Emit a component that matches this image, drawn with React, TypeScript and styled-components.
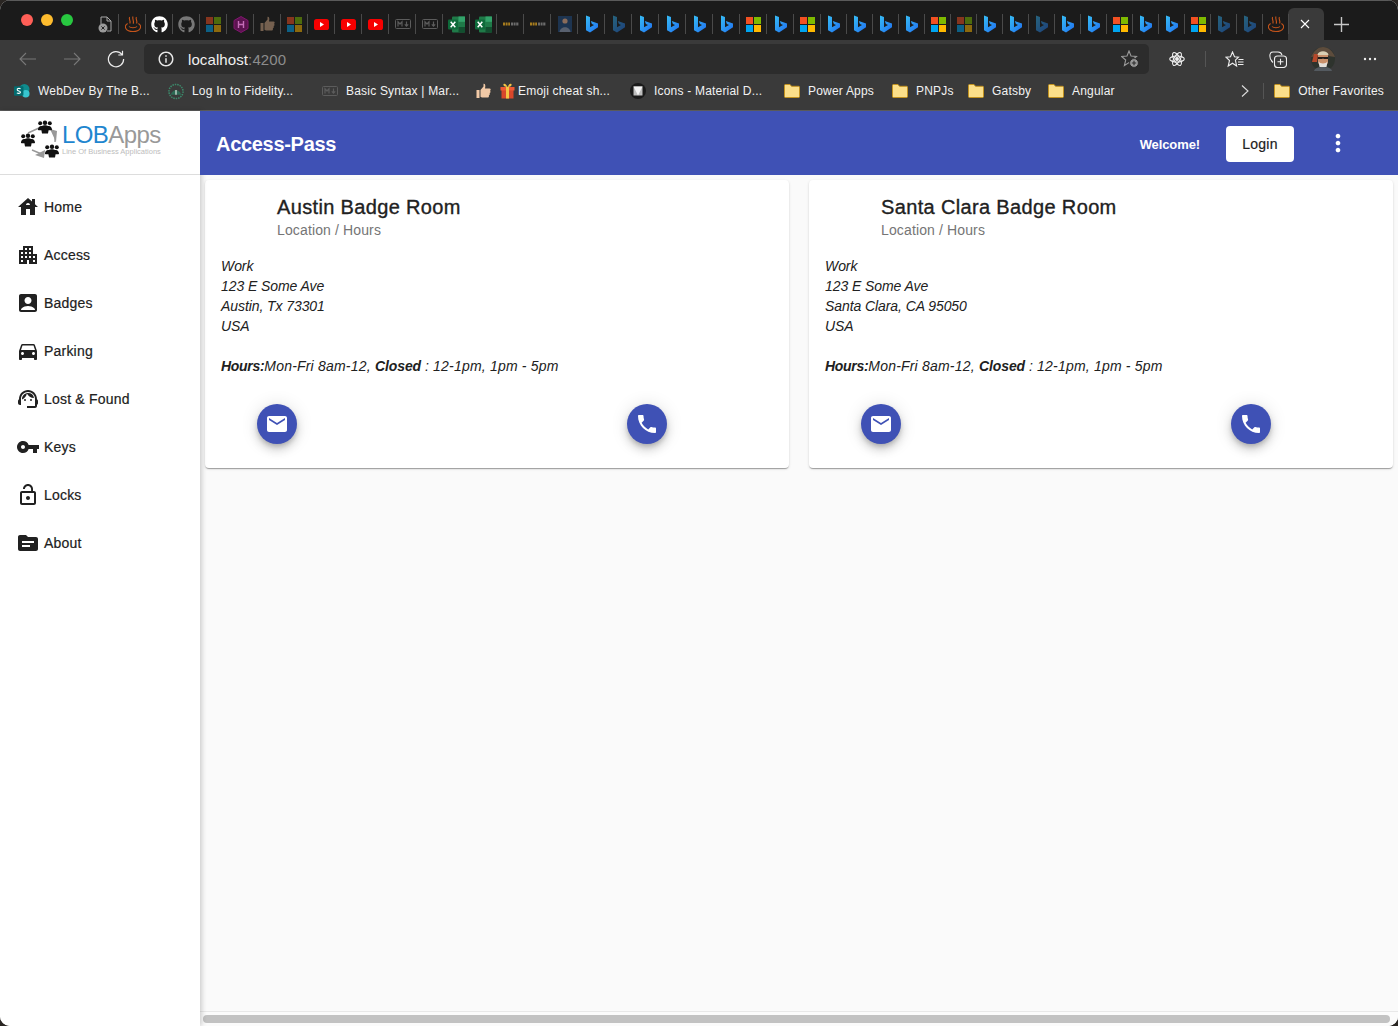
import React from "react";
import styled, { createGlobalStyle } from "styled-components";
import { FaGithub } from "react-icons/fa";
import {
  MdAccountBox,
  MdApartment,
  MdDirectionsCar,
  MdEmail,
  MdHouse,
  MdInfoOutline,
  MdLockOpen,
  MdMoreVert,
  MdOutlineSupportAgent,
  MdPhone,
  MdTopic,
  MdVpnKey,
} from "react-icons/md";

const GlobalStyle = createGlobalStyle`
  html, body {
    margin: 0;
    height: 100%;
    background: #2a2623;
    overflow: hidden;
  }
  * {
    box-sizing: border-box;
  }
`;

// favicons
const Bing = ({ dim }: { dim?: boolean }) => (
  <svg width="14" height="18" viewBox="0 0 14 18" opacity={dim ? 0.45 : 1}>
    <defs>
      <linearGradient id="bingFill" x1="0" y1="0" x2="1" y2="1">
        <stop offset="0" stopColor="#37bdf5" />
        <stop offset="1" stopColor="#1f6ff0" />
      </linearGradient>
    </defs>
    <path
      d="M1 0.5 L5 2 V12.2 L9 9.9 L6.9 8.9 L5.8 6 L13 8.6 V12.2 L5 17.5 L1 15.2 Z"
      fill="url(#bingFill)"
    />
  </svg>
);

const Microsoft = styled.span<{ $dim?: boolean }>`
  display: grid;
  grid-template-columns: 7px 7px;
  grid-template-rows: 7px 7px;
  gap: 1px;
  opacity: ${(p) => (p.$dim ? 0.5 : 1)};

  i:nth-child(1) { background: #f25022; }
  i:nth-child(2) { background: #7fba00; }
  i:nth-child(3) { background: #00a4ef; }
  i:nth-child(4) { background: #ffb900; }
`;

const Windows = ({ dim }: { dim?: boolean }) => (
  <Microsoft $dim={dim}>
    <i />
    <i />
    <i />
    <i />
  </Microsoft>
);

const Steam = () => (
  <svg width="16" height="17" viewBox="0 0 16 17" fill="none" stroke="#c4541b" strokeWidth="1.1">
    <path d="M4.6 1 C3.4 3 6 4.5 4.8 7.5 M8 0.6 C6.8 3 9.4 4.5 8.2 7.8 M11.4 1 C10.2 3 12.8 4.5 11.6 7.5" />
    <path d="M2.6 7.5 C-1.6 10 0.4 15.5 8 15.5 C15.6 15.5 17.6 10 13.4 7.5" />
    <path d="M4 10.5 C5.5 12.2 10.5 12.2 12 10.5" />
  </svg>
);

const YouTube = () => (
  <svg width="15" height="11" viewBox="0 0 15 11">
    <rect width="15" height="11" rx="2.6" fill="#f70000" />
    <path d="M6 3 L10 5.5 L6 8 Z" fill="#fff" />
  </svg>
);

const Markdown = () => (
  <svg width="16" height="10" viewBox="0 0 16 10" fill="none" stroke="#5c5c5c">
    <rect x="0.5" y="0.5" width="15" height="9" rx="1" />
    <path d="M3 7.5 V2.8 L5 5 L7 2.8 V7.5 M11.5 2.5 V7 M9.8 5.4 L11.5 7.2 L13.2 5.4" strokeWidth="1.2" />
  </svg>
);

const Excel = () => (
  <svg width="17" height="17" viewBox="0 0 17 17">
    <rect x="4" y="0.5" width="13" height="16" rx="1" fill="#1f7a48" />
    <rect x="10.5" y="0.5" width="6.5" height="5.3" fill="#33a36a" />
    <rect x="10.5" y="11" width="6.5" height="5.5" fill="#124f2f" />
    <rect x="0" y="3.5" width="10" height="10" rx="1" fill="#0e6b3a" />
    <path d="M2.7 5.8 L7.3 11.2 M7.3 5.8 L2.7 11.2" stroke="#fff" strokeWidth="1.5" />
  </svg>
);

const Hex = () => (
  <svg width="16" height="17" viewBox="0 0 16 17">
    <path d="M8 0.5 L15 4.5 V12.5 L8 16.5 L1 12.5 V4.5 Z" fill="#5c1350" stroke="#82166f" />
    <path d="M5.5 5 V12 M10.5 5 V12 M5.5 8.5 H10.5" stroke="#c56db8" strokeWidth="1.4" fill="none" />
  </svg>
);

const Thumb = ({ light }: { light?: boolean }) => (
  <svg width="15" height="16" viewBox="0 0 15 16">
    <path
      d="M0.5 7 H3.5 V15 H0.5 Z M4.5 7 L7.5 3.5 V0.8 C9.2 0.6 9.8 2.2 9 5.5 H13.5 C15 5.5 15 7.4 14 7.7 C15 8.6 14.5 9.8 13.6 10 C14.2 11 13.6 12 12.9 12.2 C13.2 13.4 12.6 14.6 11.5 14.6 H6 L4.5 13.8 Z"
      fill={light ? "#f1c9a6" : "#75604f"}
    />
  </svg>
);

const Gift = () => (
  <svg width="15" height="16" viewBox="0 0 15 16">
    <rect x="1.5" y="7" width="12" height="8.5" fill="#d9472b" />
    <rect x="0.5" y="4" width="14" height="3.5" fill="#ee5a35" />
    <rect x="6" y="4" width="3" height="11.5" fill="#f6c544" />
    <path d="M7.5 4 C3 4 2.5 0.8 4.5 0.8 C6 0.8 7.5 4 7.5 4 C7.5 4 9 0.8 10.5 0.8 C12.5 0.8 12 4 7.5 4 Z" fill="#f6c544" />
  </svg>
);

const Folder = () => (
  <svg width="16" height="14" viewBox="0 0 16 14">
    <path
      d="M0.5 1.5 C0.5 0.9 0.9 0.5 1.5 0.5 H6 L7.5 2.3 H14.5 C15.1 2.3 15.5 2.7 15.5 3.3 V12.5 C15.5 13.1 15.1 13.5 14.5 13.5 H1.5 C0.9 13.5 0.5 13.1 0.5 12.5 Z"
      fill="#fbdf8a"
      stroke="#c2921f"
    />
  </svg>
);

const SharePoint = () => (
  <svg width="17" height="16" viewBox="0 0 17 16">
    <circle cx="11" cy="6" r="5.5" fill="#0f8b8d" />
    <circle cx="12.5" cy="11" r="4" fill="#37c6d0" />
    <rect x="0" y="3" width="10" height="10" rx="1" fill="#036c70" />
    <path d="M7 5.6 C5 4.8 3 5.5 3.5 7 C4 8.2 7 7.8 6.8 9.4 C6.5 11 4 10.6 3 10" stroke="#fff" strokeWidth="1.2" fill="none" />
  </svg>
);

const Fidelity = () => (
  <svg width="17" height="17" viewBox="0 0 17 17" fill="none">
    <circle cx="8.5" cy="8.5" r="7.5" stroke="#3c8a6b" strokeWidth="1.6" strokeDasharray="1.6 1" />
    <path d="M3 12 C4.5 5.5 12.5 5.5 14 12 Z" fill="#2c6a54" />
    <path d="M8.5 12 V7" stroke="#e8f0ea" strokeWidth="1.2" />
  </svg>
);

const MaterialMark = () => (
  <svg width="16" height="16" viewBox="0 0 16 16">
    <circle cx="8" cy="8" r="8" fill="#1a1a1a" />
    <path d="M3.5 3.5 H12.5 V12.5 H3.5 Z" fill="#bdbdbd" />
    <path d="M3.5 3.5 H12.5 L8 12.5 Z" fill="#f2f2f2" />
  </svg>
);

const PageX = () => (
  <svg width="15" height="17" viewBox="0 0 15 17" fill="none" stroke="#a8a8a8">
    <path d="M3 8 V1 H9 L13 5 V15 H9" />
    <path d="M9 1 V5 H13" />
    <circle cx="5" cy="12" r="4.5" fill="#9a9a9a" stroke="none" />
    <path d="M3.4 10.4 L6.6 13.6 M6.6 10.4 L3.4 13.6" stroke="#222" />
  </svg>
);

const Ineuron = () => (
  <svg width="16" height="4" viewBox="0 0 16 4" fill="none" strokeWidth="3">
    <path d="M0 2 H7" stroke="#a67c1e" strokeDasharray="2 0.6" />
    <path d="M8 2 H16" stroke="#6b6b6b" strokeDasharray="2 0.6" />
  </svg>
);

const Portrait = () => (
  <svg width="14" height="16" viewBox="0 0 14 16">
    <rect width="14" height="16" fill="#1d3450" />
    <circle cx="7" cy="5" r="2.6" fill="#8a6c5a" />
    <path d="M1.5 16 C2 9.5 12 9.5 12.5 16 Z" fill="#58606e" />
  </svg>
);

const tabIcons: React.ReactNode[] = [
  <PageX />,
  <Steam />,
  <FaGithub size={17} color="#fff" />,
  <FaGithub size={17} color="#777" />,
  <Windows dim />,
  <Hex />,
  <Thumb />,
  <Windows dim />,
  <YouTube />,
  <YouTube />,
  <YouTube />,
  <Markdown />,
  <Markdown />,
  <Excel />,
  <Excel />,
  <Ineuron />,
  <Ineuron />,
  <Portrait />,
  <Bing />,
  <Bing dim />,
  <Bing />,
  <Bing />,
  <Bing />,
  <Bing />,
  <Windows />,
  <Bing />,
  <Windows />,
  <Bing />,
  <Bing />,
  <Bing />,
  <Bing />,
  <Windows />,
  <Windows dim />,
  <Bing />,
  <Bing />,
  <Bing dim />,
  <Bing />,
  <Bing />,
  <Windows />,
  <Bing />,
  <Bing />,
  <Windows />,
  <Bing dim />,
  <Bing dim />,
  <Steam />,
];

const bookmarks: { icon: React.ReactNode[]; label: string; width: number }[] = [
  { icon: [<SharePoint />], label: "WebDev By The B...", width: 154 },
  { icon: [<Fidelity />], label: "Log In to Fidelity...", width: 154 },
  { icon: [<Markdown />], label: "Basic Syntax | Mar...", width: 154 },
  { icon: [<Thumb light />, <Gift />], label: "Emoji cheat sh...", width: 154 },
  { icon: [<MaterialMark />], label: "Icons - Material D...", width: 154 },
  { icon: [<Folder />], label: "Power Apps", width: 108 },
  { icon: [<Folder />], label: "PNPJs", width: 76 },
  { icon: [<Folder />], label: "Gatsby", width: 80 },
  { icon: [<Folder />], label: "Angular", width: 80 },
];

const navItems = [
  { icon: <MdHouse />, label: "Home" },
  { icon: <MdApartment />, label: "Access" },
  { icon: <MdAccountBox />, label: "Badges" },
  { icon: <MdDirectionsCar />, label: "Parking" },
  { icon: <MdOutlineSupportAgent />, label: "Lost & Found" },
  { icon: <MdVpnKey />, label: "Keys" },
  { icon: <MdLockOpen />, label: "Locks" },
  { icon: <MdTopic />, label: "About" },
];

const rooms = [
  { name: "Austin Badge Room", city: "Austin, Tx 73301" },
  { name: "Santa Clara Badge Room", city: "Santa Clara, CA 95050" },
];

const People = ({ x, y }: { x: number; y: number }) => (
  <g transform={`translate(${x} ${y})`} fill="#111">
    <circle cx="2.2" cy="2.2" r="2" />
    <circle cx="7" cy="1.8" r="2.2" />
    <circle cx="11.8" cy="2.2" r="2" />
    <path d="M0 9 C0 5 3 4.6 4 5 C5 4 9 4 10 5 C11 4.6 14 5 14 9 C13 9.4 12 9.2 10.6 9.2 L10 12.5 H4 L3.4 9.2 C2 9.2 1 9.4 0 9 Z" />
  </g>
);

const Logo = () => (
  <LogoWrap>
    <LogoMark width="40" height="40" viewBox="0 0 40 40">
      <path d="M8 13 L19 8 M35 12 V22 M24 35 L12 30" stroke="#999" strokeWidth="1.4" fill="none" />
      <path d="M30 9 L37 11 L36 22 Z M15 35 L25 30 L24 38 Z" fill="#999" />
      <People x={18} y={1} />
      <People x={1} y={14} />
      <People x={25} y={25} />
    </LogoMark>
    <LogoText>
      <LogoName>
        <b>LOB</b>Apps
      </LogoName>
      <LogoTagline>Line Of Business Applications</LogoTagline>
    </LogoText>
  </LogoWrap>
);

export default function App() {
  return (
    <Window>
      <GlobalStyle />
      <TabStrip>
        <TrafficLights>
          <Light $color="#ff5f57" />
          <Light $color="#febc2e" />
          <Light $color="#28c840" />
        </TrafficLights>
        {tabIcons.map((icon, i) => (
          <TabIcon key={i} $wide={i < 27}>
            {icon}
          </TabIcon>
        ))}
        <ActiveTab>
          <svg width="10" height="10" viewBox="0 0 10 10" stroke="#fff" strokeWidth="1.1">
            <path d="M1 1 L9 9 M9 1 L1 9" />
          </svg>
        </ActiveTab>
        <NewTab>
          <svg width="15" height="15" viewBox="0 0 15 15" stroke="#c8c8c8" strokeWidth="1.4">
            <path d="M7.5 0 V15 M0 7.5 H15" />
          </svg>
        </NewTab>
      </TabStrip>

      <Toolbar>
        <ToolButton $width={44} $color="#777">
          <svg width="18" height="14" viewBox="0 0 18 14" fill="none" stroke="currentColor" strokeWidth="1.1">
            <path d="M17 7 H1 M7 1 L1 7 L7 13" />
          </svg>
        </ToolButton>
        <ToolButton $width={44} $color="#777">
          <svg width="18" height="14" viewBox="0 0 18 14" fill="none" stroke="currentColor" strokeWidth="1.1">
            <path d="M1 7 H17 M11 1 L17 7 L11 13" />
          </svg>
        </ToolButton>
        <ToolButton $width={44} $color="#ececec">
          <svg width="18" height="18" viewBox="0 0 18 18" fill="none" stroke="currentColor" strokeWidth="1.2">
            <path d="M15 4.5 A7.6 7.6 0 1 0 16.6 9 M15.5 0.8 V5 H11.3" />
          </svg>
        </ToolButton>
        <AddressBar>
          <MdInfoOutline size={18} color="#e6e6e6" />
          <Url>
            localhost<span>:4200</span>
          </Url>
          <FavAdd>
            <svg width="18" height="18" viewBox="0 0 18 18" fill="none" stroke="#9a9a9a" strokeWidth="1.1">
              <path d="M8 1 L10 6 L15.5 6.4 L11.3 10 L12.6 15.5 L8 12.6 L3.4 15.5 L4.7 10 L0.5 6.4 L6 6 Z" />
              <circle cx="13" cy="13" r="4.4" fill="#9a9a9a" stroke="#2c2c2c" strokeWidth="1" />
              <path d="M13 10.8 V15.2 M10.8 13 H15.2" stroke="#2c2c2c" />
            </svg>
          </FavAdd>
        </AddressBar>
        <ToolRight>
          <ToolButton $width={28} $color="#eee">
            <svg width="16" height="16" viewBox="-8 -8 16 16" fill="none" stroke="currentColor" strokeWidth="1.1">
              <ellipse rx="7.3" ry="3" />
              <ellipse rx="7.3" ry="3" transform="rotate(60)" />
              <ellipse rx="7.3" ry="3" transform="rotate(120)" />
              <circle r="1.4" fill="currentColor" />
            </svg>
          </ToolButton>
          <ToolDivider />
          <ToolButton $width={28} $color="#eee">
            <svg width="19" height="17" viewBox="0 0 19 17" fill="none" stroke="currentColor" strokeWidth="1.1">
              <path d="M7.5 1 L9.5 5.8 L13.5 6.2 L10.4 9.2 L11.6 15 L7.5 12.2 L3.2 15 L4.5 9.5 L1 6.2 L5.5 5.8 Z" />
              <path d="M13.5 8.5 H18.5 M13 11 H18.5 M13 13.5 H18.5" />
            </svg>
          </ToolButton>
          <ToolButton $width={28} $margin={16} $color="#eee">
            <svg width="18" height="17" viewBox="0 0 18 17" fill="none" stroke="currentColor" strokeWidth="1.1">
              <path d="M4 11.5 C1.5 9.5 0.5 7 1 3.5 C1.2 2 2.3 1 4 1 H9 C11 1 12.5 2 13 4" />
              <rect x="5.5" y="5" width="12" height="11.5" rx="3" />
              <path d="M11.5 7.8 V13.7 M8.5 10.7 H14.5" />
            </svg>
          </ToolButton>
          <Avatar $margin={19}>
            <svg width="24" height="24" viewBox="0 0 24 24">
              <circle cx="12" cy="12" r="12" fill="#2e332d" />
              <path d="M0 10 C3 3 8 0 12 0 C17 0 22 4 24 10 L17 9 H7 Z" fill="#5d4c3c" />
              <path d="M1 15 H6 L7 7 H3 Z" fill="#b5482a" />
              <path d="M6.5 8 C7 3 17 3 17.5 8 Z" fill="#d9cfb4" />
              <path d="M7 8 H17 V14 C17 18 14 19.5 12 19.5 C10 19.5 7 18 7 14 Z" fill="#c9906a" />
              <path d="M7 10 H17 V12 H13 L12 11.4 L11 12 H7 Z" fill="#211c1a" />
              <path d="M7.5 14.5 C9 17 15 17 16.5 14.5 L15.5 20 H8.5 Z" fill="#e3dfda" />
              <path d="M3 24 C4 20.5 8 20 12 20 C16 20 20 20.5 21 24 Z" fill="#545a60" />
            </svg>
          </Avatar>
          <ToolButton $width={28} $margin={21} $color="#eee">
            <svg width="14" height="4" viewBox="0 0 14 4" fill="currentColor">
              <circle cx="2" cy="2" r="1.2" />
              <circle cx="7" cy="2" r="1.2" />
              <circle cx="12" cy="2" r="1.2" />
            </svg>
          </ToolButton>
        </ToolRight>
      </Toolbar>

      <BookmarkBar>
        {bookmarks.map((b) => (
          <Bookmark key={b.label} $width={b.width}>
            {b.icon.map((icon, i) => (
              <BookmarkIcon key={i}>{icon}</BookmarkIcon>
            ))}
            <span>{b.label}</span>
          </Bookmark>
        ))}
        <BookmarkEnd>
          <svg width="8" height="12" viewBox="0 0 8 12" fill="none" stroke="#ddd" strokeWidth="1.1">
            <path d="M1 0.5 L7 6 L1 11.5" />
          </svg>
          <EndDivider />
          <Bookmark>
            <BookmarkIcon>
              <Folder />
            </BookmarkIcon>
            <span>Other Favorites</span>
          </Bookmark>
        </BookmarkEnd>
      </BookmarkBar>

      <AppBody>
        <Sidebar>
          <Logo />
          <NavList>
            {navItems.map((item) => (
              <NavItem key={item.label}>
                <NavIcon>{item.icon}</NavIcon>
                {item.label}
              </NavItem>
            ))}
          </NavList>
        </Sidebar>

        <Main>
          <Header>
            <AppTitle>Access-Pass</AppTitle>
            <Welcome>Welcome!</Welcome>
            <LoginButton>Login</LoginButton>
            <MoreButton>
              <MdMoreVert size={28} />
            </MoreButton>
          </Header>

          <Content>
            {rooms.map((room) => (
              <Card key={room.name}>
                <CardHeader>
                  <CardTitle>{room.name}</CardTitle>
                  <CardSubtitle>Location / Hours</CardSubtitle>
                </CardHeader>
                <Address>
                  Work
                  <br />
                  123 E Some Ave
                  <br />
                  {room.city}
                  <br />
                  USA
                </Address>
                <Address>
                  <HoursLabel>Hours:</HoursLabel>
                  <HoursText>Mon-Fri 8am-12, </HoursText>
                  <b>Closed</b> <HoursText>: 12-1pm, 1pm - 5pm</HoursText>
                </Address>
                <CardActions>
                  <Fab>
                    <MdEmail size={24} />
                  </Fab>
                  <Fab>
                    <MdPhone size={24} />
                  </Fab>
                </CardActions>
              </Card>
            ))}
          </Content>

          <ScrollTrack>
            <ScrollThumb />
          </ScrollTrack>
        </Main>
      </AppBody>
    </Window>
  );
}

const Window = styled.div`
  display: flex;
  flex-direction: column;
  height: 100vh;
  border-radius: 10px;
  overflow: hidden;
  background: #fff;
  font-family: "Liberation Sans", Arial, sans-serif;
`;

const TabStrip = styled.div`
  display: flex;
  align-items: flex-end;
  flex: none;
  height: 40px;
  background: #1b1b1b;
  border-top: 1px solid #5a5a5a;
`;

const TrafficLights = styled.div`
  display: flex;
  gap: 8px;
  align-self: flex-start;
  flex: none;
  width: 92px;
  padding: 13px 0 0 21px;
`;

const Light = styled.span<{ $color: string }>`
  width: 12px;
  height: 12px;
  border-radius: 50%;
  background: ${(p) => p.$color};
`;

const TabIcon = styled.div<{ $wide?: boolean }>`
  display: flex;
  align-items: center;
  justify-content: center;
  flex: none;
  width: ${(p) => (p.$wide ? "27px" : "26px")};
  height: 30px;
  margin-bottom: 1px;
  position: relative;

  &::after {
    content: "";
    position: absolute;
    right: 0;
    top: 5px;
    bottom: 5px;
    width: 1px;
    background: #4a4a4a;
  }
`;

const ActiveTab = styled.div`
  display: flex;
  align-items: center;
  justify-content: center;
  flex: none;
  width: 36px;
  height: 32px;
  margin-left: -1px;
  padding-right: 2px;
  background: #3a3a3a;
  border-radius: 6px 6px 0 0;
`;

const NewTab = styled.div`
  display: flex;
  align-items: center;
  justify-content: center;
  flex: none;
  width: 34px;
  height: 32px;
`;

const Toolbar = styled.div`
  display: flex;
  align-items: center;
  flex: none;
  height: 38px;
  padding-left: 6px;
  background: #3a3a3a;
`;

const ToolButton = styled.div<{ $width: number; $margin?: number; $color: string }>`
  display: flex;
  align-items: center;
  justify-content: center;
  flex: none;
  width: ${(p) => p.$width}px;
  margin-left: ${(p) => p.$margin ?? 0}px;
  color: ${(p) => p.$color};
`;

const AddressBar = styled.div`
  display: flex;
  align-items: center;
  flex: none;
  width: 1005px;
  height: 30px;
  margin-left: 6px;
  padding: 0 10px 0 13px;
  background: #2c2c2c;
  border-radius: 5px;
`;

const Url = styled.div`
  flex: 1;
  margin-left: 13px;
  font-size: 15px;
  letter-spacing: 0.1px;
  color: #f0f0f0;

  span {
    color: #8c8c8c;
  }
`;

const FavAdd = styled.div`
  display: flex;
`;

const ToolRight = styled.div`
  display: flex;
  align-items: center;
  margin-left: 14px;
`;

const ToolDivider = styled.div`
  flex: none;
  width: 1px;
  height: 16px;
  margin: 0 14px;
  background: #555;
`;

const Avatar = styled.div<{ $margin: number }>`
  display: flex;
  flex: none;
  margin-left: ${(p) => p.$margin}px;
`;

const BookmarkBar = styled.div`
  display: flex;
  align-items: center;
  flex: none;
  height: 33px;
  padding: 0 14px 6px 14px;
  background: #3a3a3a;
  border-bottom: 1px solid #5a5a5a;
`;

const Bookmark = styled.div<{ $width?: number }>`
  display: flex;
  align-items: center;
  flex: none;
  width: ${(p) => (p.$width ? `${p.$width}px` : "auto")};
  font-size: 12px;
  letter-spacing: 0.2px;
  color: #f2f2f2;
  white-space: nowrap;
`;

const BookmarkIcon = styled.span`
  display: flex;
  align-items: center;
  flex: none;
  width: 16px;
  margin-right: 8px;

  &:nth-child(2) {
    margin-right: 2px;
  }
`;

const BookmarkEnd = styled.div`
  display: flex;
  align-items: center;
  margin-left: auto;
`;

const EndDivider = styled.div`
  flex: none;
  width: 1px;
  height: 16px;
  margin: 0 10px 0 14px;
  background: #555;
`;

const AppBody = styled.div`
  display: flex;
  flex: 1;
  min-height: 0;
`;

const Sidebar = styled.aside`
  position: relative;
  z-index: 1;
  flex: none;
  width: 200px;
  background: #fff;
  box-shadow: 2px 0 5px rgba(0, 0, 0, 0.18);
`;

const LogoWrap = styled.div`
  display: flex;
  align-items: center;
  height: 64px;
  padding: 0 0 6px 20px;
  border-bottom: 1px solid #ddd;
`;

const LogoMark = styled.svg`
  flex: none;
`;

const LogoText = styled.div`
  margin-left: 2px;
`;

const LogoName = styled.div`
  margin-bottom: 2px;
  font-size: 24px;
  line-height: 22px;
  letter-spacing: -0.6px;
  color: #999;

  b {
    font-weight: 400;
    color: #1f86cf;
  }
`;

const LogoTagline = styled.div`
  font-size: 7.5px;
  line-height: 8px;
  color: #bdbdbd;
  white-space: nowrap;
`;

const NavList = styled.nav`
  display: flex;
  flex-direction: column;
  padding-top: 8px;
`;

const NavItem = styled.div`
  display: flex;
  align-items: center;
  height: 48px;
  padding-left: 16px;
  font-size: 14px;
  letter-spacing: 0.2px;
  color: #212121;
  -webkit-text-stroke: 0.2px #212121;
`;

const NavIcon = styled.span`
  display: flex;
  justify-content: center;
  width: 24px;
  margin-right: 4px;
  font-size: 24px;
  color: #212121;
`;

const Main = styled.main`
  display: flex;
  flex-direction: column;
  flex: 1;
  min-width: 0;
  background: #fafafa;
`;

const Header = styled.header`
  position: relative;
  z-index: 2;
  display: flex;
  align-items: center;
  flex: none;
  height: 64px;
  padding: 2px 0 0 16px;
  background: #3f51b5;
  color: #fff;
`;

const AppTitle = styled.h1`
  flex: 1;
  margin: 0;
  font-size: 20px;
  font-weight: 700;
  letter-spacing: -0.3px;
`;

const Welcome = styled.span`
  font-size: 13px;
  font-weight: 700;
  letter-spacing: -0.1px;
`;

const LoginButton = styled.button`
  width: 68px;
  height: 36px;
  margin-left: 26px;
  padding: 0;
  border: 0;
  border-radius: 4px;
  background: #fff;
  font-family: inherit;
  font-size: 14px;
  letter-spacing: 0.2px;
  color: #212121;
  -webkit-text-stroke: 0.2px #212121;
`;

const MoreButton = styled.span`
  display: flex;
  justify-content: center;
  width: 40px;
  margin: 0 40px 2px 24px;
  color: #fff;
`;

const Content = styled.div`
  display: grid;
  grid-template-columns: 584px 584px;
  align-content: start;
  gap: 20px;
  flex: 1;
  padding: 5px 0 0 5px;
`;

const Card = styled.section`
  height: 288px;
  padding: 16px;
  background: #fff;
  border-radius: 4px;
  box-shadow: 0 2px 1px -1px rgba(0, 0, 0, 0.2), 0 1px 1px rgba(0, 0, 0, 0.14), 0 1px 3px rgba(0, 0, 0, 0.12);
`;

const CardHeader = styled.div`
  padding-left: 56px;
  margin-bottom: 16px;
`;

const CardTitle = styled.div`
  margin-bottom: 2px;
  font-size: 20px;
  line-height: 22px;
  letter-spacing: 0.35px;
  color: #212121;
  -webkit-text-stroke: 0.35px #212121;
`;

const CardSubtitle = styled.div`
  font-size: 14px;
  line-height: 20px;
  letter-spacing: 0.13px;
  color: #757575;
`;

const Address = styled.p`
  margin: 0 0 20px;
  font-size: 14px;
  line-height: 20px;
  letter-spacing: -0.08px;
  font-style: italic;
  color: #212121;
`;

const HoursLabel = styled.b`
  letter-spacing: -0.3px;
`;

const HoursText = styled.span`
  letter-spacing: 0.2px;
`;

const CardActions = styled.div`
  display: flex;
  justify-content: space-between;
  padding: 8px 106px 0 36px;
`;

const Fab = styled.div`
  display: flex;
  align-items: center;
  justify-content: center;
  width: 40px;
  height: 40px;
  border-radius: 50%;
  background: #3f51b5;
  color: #fff;
  box-shadow: 0 3px 5px -1px rgba(0, 0, 0, 0.2), 0 6px 10px rgba(0, 0, 0, 0.14), 0 1px 18px rgba(0, 0, 0, 0.12);
`;

const ScrollTrack = styled.div`
  flex: none;
  height: 15px;
  padding: 3px 8px 3px 3px;
  background: #fbfbfb;
  border-top: 1px solid #e8e8e8;
`;

const ScrollThumb = styled.div`
  height: 8px;
  border-radius: 4px;
  background: #c2c2c2;
`;
